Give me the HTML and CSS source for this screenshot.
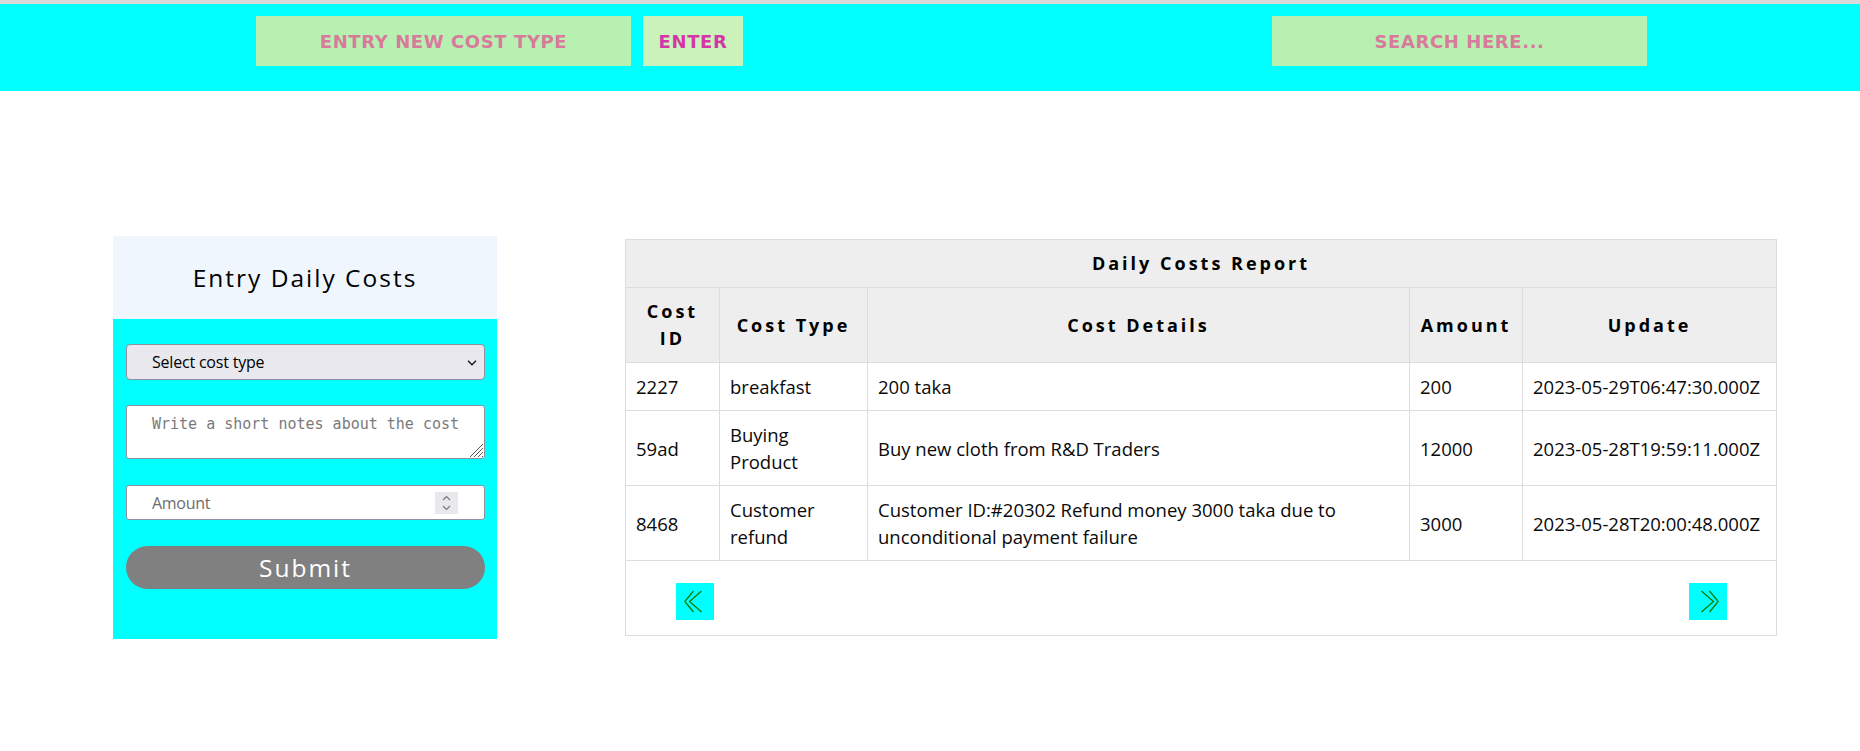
FILE: index.html
```html
<!DOCTYPE html>
<html lang="en">
<head>
<meta charset="utf-8">
<title>Daily Costs</title>
<link rel="stylesheet" href="styles.css">
</head>
<body>
<header class="topbar">
  <div class="type-form">
    <input class="top-input" type="text" placeholder="ENTRY NEW COST TYPE">
    <button class="enter-btn" type="button">ENTER</button>
  </div>
  <input class="top-input search" type="text" placeholder="SEARCH HERE...">
</header>

<main class="content">
  <section class="entry-card">
    <h2 class="entry-title">Entry Daily Costs</h2>
    <form class="entry-form">
      <div class="field select-field">
        <select class="entry-select">
          <option>Select cost type</option>
        </select>
        <svg class="select-arrow" width="10" height="6" viewBox="0 0 10 6"><path d="M1 0.8 L5 4.8 L9 0.8" fill="none" stroke="#1b1b1b" stroke-width="1.5"/></svg>
      </div>
      <div class="field textarea-field">
        <textarea class="entry-notes" placeholder="Write a short notes about the cost"></textarea>
        <svg class="resizer" width="16" height="16" viewBox="0 0 16 16">
          <path d="M16 3 L3 16 M16 7 L7 16 M16 11 L11 16 M16 15 L15 16" stroke="#5a5a5a" stroke-width="1" fill="none"/>
        </svg>
      </div>
      <div class="field number-field">
        <input class="entry-amount" type="number" placeholder="Amount">
        <span class="spinner">
          <svg width="23" height="22" viewBox="0 0 23 22"><path d="M8 8 L11.5 4.5 L15 8 M8 14 L11.5 17.5 L15 14" fill="none" stroke="#777" stroke-width="1.1"/></svg>
        </span>
      </div>
      <button class="submit-btn" type="button">Submit</button>
    </form>
  </section>

  <section class="report">
    <table class="report-table">
      <colgroup>
        <col class="c-id"><col class="c-type"><col class="c-details"><col class="c-amount"><col class="c-update">
      </colgroup>
      <thead>
        <tr><th colspan="5">Daily Costs Report</th></tr>
        <tr>
          <th>Cost ID</th>
          <th>Cost Type</th>
          <th>Cost Details</th>
          <th>Amount</th>
          <th>Update</th>
        </tr>
      </thead>
      <tbody>
        <tr>
          <td>2227</td>
          <td>breakfast</td>
          <td>200 taka</td>
          <td>200</td>
          <td>2023-05-29T06:47:30.000Z</td>
        </tr>
        <tr>
          <td>59ad</td>
          <td>Buying Product</td>
          <td>Buy new cloth from R&amp;D Traders</td>
          <td>12000</td>
          <td>2023-05-28T19:59:11.000Z</td>
        </tr>
        <tr>
          <td>8468</td>
          <td>Customer refund</td>
          <td>Customer ID:#20302 Refund money 3000 taka due to unconditional payment failure</td>
          <td>3000</td>
          <td>2023-05-28T20:00:48.000Z</td>
        </tr>
        <tr>
          <td class="pager-cell" colspan="5">
            <div class="pager">
              <button class="page-btn" type="button" aria-label="Previous">
                <svg width="38" height="37" viewBox="0 0 38 37"><path d="M17.5 8 L8.8 18.5 L17.5 29 M25.5 8 L13.5 18.5 L25.5 29" fill="none" stroke="#0a7d00" stroke-width="1.3"/></svg>
              </button>
              <button class="page-btn" type="button" aria-label="Next">
                <svg width="38" height="37" viewBox="0 0 38 37"><path d="M20.5 8 L29.2 18.5 L20.5 29 M12.5 8 L24.5 18.5 L12.5 29" fill="none" stroke="#0a7d00" stroke-width="1.3"/></svg>
              </button>
            </div>
          </td>
        </tr>
      </tbody>
    </table>
  </section>
</main>
</body>
</html>
```

FILE: styles.css
```css
html, body {
  margin: 0;
  padding: 0;
  background: #ffffff;
}

body {
  font-family: "Open Sans", "Noto Sans", sans-serif;
  color: #111;
}

/* ---------- top bar ---------- */
.topbar {
  box-sizing: border-box;
  height: 91px;
  border-top: 4px solid #d9d9d9;
  background: #00ffff;
  display: flex;
  align-items: flex-start;
  padding: 12px 0 0 256px;
}

.type-form {
  display: flex;
  gap: 12px;
}

.top-input,
.enter-btn {
  box-sizing: border-box;
  height: 50px;
  border: none;
  outline: none;
  padding: 0;
  font-family: "DejaVu Sans", sans-serif;
  font-weight: 700;
  font-size: 18px;
  letter-spacing: 0.6px;
  text-align: center;
}

.top-input {
  width: 375px;
  background: #b8f0b2;
  color: #d4338f;
}

.top-input::placeholder {
  color: #d87a9b;
  opacity: 1;
}

.enter-btn {
  width: 100px;
  background: #ccf2bb;
  color: #d436a8;
}

.search {
  margin-left: 529px;
}

/* ---------- content ---------- */
.content {
  display: flex;
  align-items: flex-start;
  gap: 128px;
  padding: 145px 0 0 113px;
}

/* ---------- entry card ---------- */
.entry-card {
  width: 384px;
  background: #00ffff;
}

.entry-title {
  margin: 0;
  height: 83px;
  background: #eff6fe;
  display: flex;
  align-items: center;
  justify-content: center;
  font-family: "Open Sans", sans-serif;
  font-weight: 400;
  font-size: 24.5px;
  letter-spacing: 2px;
  color: #000;
}

.entry-form {
  display: flex;
  flex-direction: column;
  padding: 25px 12px 50px 13px;
}

.field {
  position: relative;
}

.textarea-field {
  margin-top: 25px;
}

.number-field {
  margin-top: 26px;
}

.entry-select,
.entry-notes,
.entry-amount {
  box-sizing: border-box;
  display: block;
  width: 100%;
  margin: 0;
  border: 1px solid #8f8f9d;
  outline: none;
}

.entry-select {
  height: 36px;
  appearance: none;
  -webkit-appearance: none;
  background: #e9e8ee;
  border-radius: 4px;
  padding: 0 25px;
  font-family: "Open Sans", sans-serif;
  font-size: 16px;
  letter-spacing: -0.2px;
  color: #000;
}

.select-arrow {
  position: absolute;
  right: 8px;
  top: 16px;
}

.entry-notes {
  height: 54px;
  resize: none;
  background: #fff;
  border-radius: 3px;
  padding: 10px 12px 10px 25px;
  font-family: "DejaVu Sans Mono", monospace;
  font-size: 15px;
  line-height: 17px;
}

.entry-notes::placeholder {
  color: #7a7a7a;
}

.resizer {
  position: absolute;
  right: 2px;
  bottom: 2px;
}

.entry-amount {
  height: 35px;
  background: #fff;
  border-radius: 3px;
  padding: 0 25px;
  font-family: "Open Sans", sans-serif;
  font-size: 16px;
  letter-spacing: -0.3px;
  color: #000;
  -moz-appearance: textfield;
}

.entry-amount::placeholder {
  color: #6d6d6d;
}

.entry-amount::-webkit-inner-spin-button,
.entry-amount::-webkit-outer-spin-button {
  -webkit-appearance: none;
  margin: 0;
}

.spinner {
  position: absolute;
  right: 27px;
  top: 7px;
  width: 23px;
  height: 22px;
  background: #e9e9ed;
  display: flex;
}

.submit-btn {
  margin-top: 26px;
  height: 43px;
  border: none;
  border-radius: 22px;
  background: #808080;
  color: #ffffff;
  font-family: "Open Sans", sans-serif;
  font-size: 24.5px;
  letter-spacing: 2px;
  padding: 0;
}

/* ---------- report table ---------- */
.report {
  margin-top: 3px;
}

.report-table {
  border-collapse: collapse;
  table-layout: fixed;
  width: 1151px;
  font-family: "Open Sans", sans-serif;
  font-size: 18.5px;
  line-height: 27px;
  color: #0a0a0a;
}

.c-id { width: 94px; }
.c-type { width: 148px; }
.c-details { width: 542px; }
.c-amount { width: 113px; }
.c-update { width: 254px; }

.report-table th,
.report-table td {
  border: 1px solid #dddddd;
  padding: 10px;
}

.report-table th {
  background: #eeeeee;
  font-size: 18px;
  font-weight: 700;
  letter-spacing: 3px;
  text-align: center;
  color: #000;
}

.report-table td {
  text-align: left;
}

.report-table td.pager-cell {
  padding: 22px 49px 15px 50px;
}

.pager {
  display: flex;
  justify-content: space-between;
}

.page-btn {
  width: 38px;
  height: 37px;
  padding: 0;
  border: none;
  background: #00ffff;
  display: flex;
}
```
